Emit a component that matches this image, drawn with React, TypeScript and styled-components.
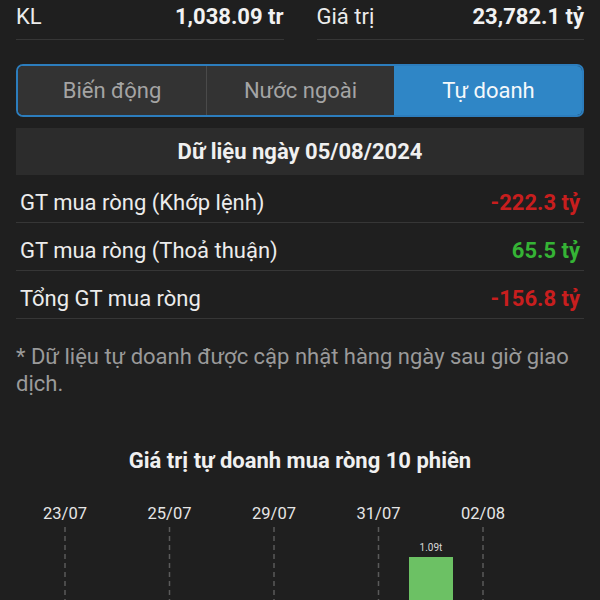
import React from 'react';
import styled, { createGlobalStyle } from 'styled-components';

const GlobalStyle = createGlobalStyle`
  html, body {
    margin: 0;
    padding: 0;
    background: #1f1f1f;
  }
  body {
    font-family: Roboto, "Noto Sans", "Liberation Sans", sans-serif;
    color: #ececec;
    overflow: hidden;
  }
`;

const Page = styled.div`
  width: 600px;
  height: 600px;
  box-sizing: border-box;
  padding: 0 16px;
  background: #1f1f1f;
  overflow: hidden;
`;

const StatsRow = styled.div`
  display: grid;
  grid-template-columns: 1fr 1fr;
  column-gap: 33px;
`;

const StatCell = styled.div`
  display: flex;
  justify-content: space-between;
  align-items: center;
  padding: 4px 0 9px;
  line-height: 26px;
  border-bottom: 1px solid #363636;
`;

const StatLabel = styled.span`
  font-size: 22px;
  color: #ececec;
`;

const StatValue = styled.span`
  font-size: 22px;
  font-weight: 700;
  color: #f2f2f2;
`;

const Tabs = styled.div`
  display: grid;
  grid-template-columns: repeat(3, 1fr);
  height: 53px;
  margin-top: 24px;
  border: 2px solid #2c7dbd;
  border-radius: 7px;
  overflow: hidden;
  box-sizing: border-box;
`;

const Tab = styled.div<{ $active?: boolean }>`
  display: flex;
  align-items: center;
  justify-content: center;
  font-size: 22px;
  background: ${({ $active }) => ($active ? '#2f86c6' : '#333333')};
  color: ${({ $active }) => ($active ? '#f4f8fb' : '#a4a4a4')};
  border-left: 1px solid ${({ $active }) => ($active ? '#2f86c6' : '#4a4a4a')};

  &:first-child {
    border-left: none;
  }
`;

const DateHeader = styled.div`
  margin-top: 11px;
  height: 47px;
  display: flex;
  align-items: center;
  justify-content: center;
  background: #2c2c2c;
  font-size: 22px;
  font-weight: 700;
  color: #f0f0f0;
`;

const DataRow = styled.div`
  box-sizing: border-box;
  display: flex;
  justify-content: space-between;
  align-items: center;
  height: 48px;
  padding: 7px 4px 0;
  border-bottom: 1px solid #363636;
`;

const RowLabel = styled.span`
  font-size: 22px;
  color: #ececec;
`;

const RowValue = styled.span<{ $tone: 'up' | 'down' }>`
  font-size: 22px;
  font-weight: 700;
  color: ${({ $tone }) => ($tone === 'up' ? '#35b335' : '#c81e1e')};
`;

const Note = styled.p`
  margin: 24px 0 0;
  font-size: 22px;
  line-height: 27px;
  color: #9a9a9a;
`;

const ChartTitle = styled.h3`
  margin: 51px 0 0;
  text-align: center;
  font-size: 22px;
  font-weight: 700;
  line-height: 26px;
  color: #f0f0f0;
`;

const ChartSvg = styled.svg`
  display: block;
  margin-top: 15px;
  width: 568px;
  height: 120px;
`;

const rows: { label: string; value: string; tone: 'up' | 'down' }[] = [
  { label: 'GT mua ròng (Khớp lệnh)', value: '-222.3 tỷ', tone: 'down' },
  { label: 'GT mua ròng (Thoả thuận)', value: '65.5 tỷ', tone: 'up' },
  { label: 'Tổng GT mua ròng', value: '-156.8 tỷ', tone: 'down' },
];

const ticks = ['23/07', '25/07', '29/07', '31/07', '02/08'];

const Chart = () => (
  <ChartSvg viewBox="0 0 568 120">
    {ticks.map((t, i) => {
      const x = 49 + i * 104.5;
      return (
        <g key={t}>
          <text
            x={x}
            y={30}
            textAnchor="middle"
            fontSize="16.5"
            fill="#e6e6e6"
            fontFamily="Roboto, sans-serif"
          >
            {t}
          </text>
          <line x1={x} y1={38} x2={x} y2={120} stroke="#5a5a5a" strokeWidth="1.5" strokeDasharray="5 4" />
        </g>
      );
    })}
    <text x={415} y={62} textAnchor="middle" fontSize="10" fill="#d8d8d8" fontFamily="Roboto, sans-serif">
      1.09t
    </text>
    <rect x={393} y={68} width={44} height={60} fill="#6cc164" />
  </ChartSvg>
);

export default function App() {
  return (
    <>
      <GlobalStyle />
      <Page>
        <StatsRow>
          <StatCell>
            <StatLabel>KL</StatLabel>
            <StatValue>1,038.09 tr</StatValue>
          </StatCell>
          <StatCell>
            <StatLabel>Giá trị</StatLabel>
            <StatValue>23,782.1 tỷ</StatValue>
          </StatCell>
        </StatsRow>

        <Tabs>
          <Tab>Biến động</Tab>
          <Tab>Nước ngoài</Tab>
          <Tab $active>Tự doanh</Tab>
        </Tabs>

        <DateHeader>Dữ liệu ngày 05/08/2024</DateHeader>
        {rows.map((r) => (
          <DataRow key={r.label}>
            <RowLabel>{r.label}</RowLabel>
            <RowValue $tone={r.tone}>{r.value}</RowValue>
          </DataRow>
        ))}

        <Note>* Dữ liệu tự doanh được cập nhật hàng ngày sau giờ giao dịch.</Note>

        <ChartTitle>Giá trị tự doanh mua ròng 10 phiên</ChartTitle>
        <Chart />
      </Page>
    </>
  );
}
